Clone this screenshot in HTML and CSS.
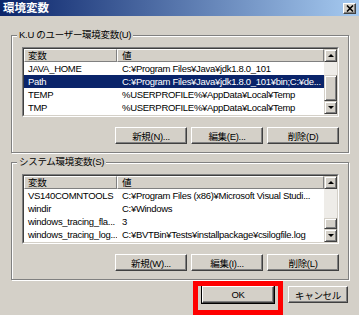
FILE: index.html
```html
<!DOCTYPE html>
<html lang="ja">
<head>
    <meta charset="UTF-8">
    <title>環境変数</title>
    <link rel="stylesheet" href="styles.css">
</head>
<body>
    <div class="titlebar">
        <span class="title">環境変数</span>
        <span class="close">
            <svg width="8" height="7" viewBox="0 0 8 7"><path d="M1 0.5L7 6.5M7 0.5L1 6.5" stroke="#000" stroke-width="1.6"/></svg>
        </span>
    </div>

    <fieldset class="group">
        <legend>K.U のユーザー環境変数(U)</legend>
        <div class="list">
            <div class="listIn">
                <div class="rows">
                    <div class="head"><span class="h1">変数</span><span class="h2">値</span></div>
                    <div class="row"><span class="c1">JAVA_HOME</span><span class="c2">C:¥Program Files¥Java¥jdk1.8.0_101</span></div>
                    <div class="row sel"><span class="c1">Path</span><span class="c2">C:¥Program Files¥Java¥jdk1.8.0_101¥bin;C:¥de...</span></div>
                    <div class="row"><span class="c1">TEMP</span><span class="c2">%USERPROFILE%¥AppData¥Local¥Temp</span></div>
                    <div class="row"><span class="c1">TMP</span><span class="c2">%USERPROFILE%¥AppData¥Local¥Temp</span></div>
                </div>
                <div class="scroll">
                    <div class="sbBtn"><span class="up"></span></div>
                    <div class="track t1"></div>
                    <div class="thumb th1"></div>
                    <div class="sbBtn"><span class="down"></span></div>
                </div>
            </div>
        </div>
        <div class="btns">
            <button>新規(N)...</button>
            <button>編集(E)...</button>
            <button>削除(D)</button>
        </div>
    </fieldset>

    <fieldset class="group">
        <legend>システム環境変数(S)</legend>
        <div class="list">
            <div class="listIn">
                <div class="rows">
                    <div class="head"><span class="h1">変数</span><span class="h2">値</span></div>
                    <div class="row"><span class="c1">VS140COMNTOOLS</span><span class="c2">C:¥Program Files (x86)¥Microsoft Visual Studi...</span></div>
                    <div class="row"><span class="c1">windir</span><span class="c2">C:¥Windows</span></div>
                    <div class="row"><span class="c1">windows_tracing_fla...</span><span class="c2">3</span></div>
                    <div class="row"><span class="c1">windows_tracing_log...</span><span class="c2">C:¥BVTBin¥Tests¥installpackage¥csilogfile.log</span></div>
                </div>
                <div class="scroll">
                    <div class="sbBtn"><span class="up"></span></div>
                    <div class="track t2"></div>
                    <div class="thumb th2"></div>
                    <div class="sbBtn"><span class="down"></span></div>
                </div>
            </div>
        </div>
        <div class="btns">
            <button>新規(W)...</button>
            <button>編集(I)...</button>
            <button>削除(L)</button>
        </div>
    </fieldset>

    <div class="footer">
        <button class="default">OK</button>
        <button class="cancel">キャンセル</button>
    </div>

    <div class="mark"></div>
</body>
</html>
```

FILE: styles.css
```css
*{
    margin: 0;
    padding: 0;
    box-sizing: border-box;
}
body{
    width: 359px;
    height: 315px;
    background: #d4d0c8;
    font-family: "Liberation Sans", "Noto Sans CJK JP", sans-serif;
    font-size: 9.5px;
    letter-spacing: -0.3px;
    color: #000;
    overflow: hidden;
    position: relative;
}
/* title bar */
.titlebar{
    height: 16px;
    background: linear-gradient(to right, #0a246a, #a6caf0);
    display: flex;
    align-items: center;
    justify-content: space-between;
    padding: 0 3px;
}
.title{
    color: #fff;
    font-weight: bold;
    font-size: 11.5px;
    line-height: 15px;
    letter-spacing: 0;
}
.close{
    width: 13px;
    height: 11px;
    background: #d4d0c8;
    border: 1px solid;
    border-color: #fff #404040 #404040 #fff;
    box-shadow: inset -1px -1px #808080;
    display: flex;
    align-items: center;
    justify-content: center;
}
/* group boxes */
.group{
    width: 338px;
    margin: 13px 0 0 11px;
    border: 1px solid #808080;
    box-shadow: 1px 1px 0 #fff, inset 1px 1px 0 #fff;
    padding: 6px 9px 8px 10px;
}
.group + .group{
    margin-top: 3px;
}
.group legend{
    margin-left: -5px;
    padding: 0 2px;
    line-height: 12px;
    background: #d4d0c8;
}
/* list view */
.list{
    height: 70px;
    border: 1px solid;
    border-color: #808080 #fff #fff #808080;
}
.listIn{
    height: 100%;
    display: flex;
    border: 1px solid;
    border-color: #404040 #d4d0c8 #d4d0c8 #404040;
    background: #fff;
}
.rows{
    flex: 1;
    overflow: hidden;
}
.head{
    display: flex;
    height: 13px;
    line-height: 11px;
    background: #d4d0c8;
}
.h1, .h2{
    border: 1px solid;
    border-color: #fff #808080 #808080 #fff;
}
.h1{
    width: 93px;
    padding-left: 3px;
}
.h2{
    flex: 1;
    padding-left: 4px;
}
.row{
    display: flex;
    height: 13px;
    line-height: 13px;
    white-space: nowrap;
}
.c1{
    width: 93px;
    padding-left: 4px;
    overflow: hidden;
}
.c2{
    flex: 1;
    padding-left: 5px;
    overflow: hidden;
}
.sel{
    background: #0a246a;
    color: #fff;
}
/* scrollbar */
.scroll{
    width: 13px;
    display: flex;
    flex-direction: column;
    background: #eeece8;
}
.sbBtn, .thumb{
    background: #d4d0c8;
    border: 1px solid;
    border-color: #d4d0c8 #404040 #404040 #d4d0c8;
    box-shadow: inset 1px 1px #fff, inset -1px -1px #808080;
}
.sbBtn{
    height: 13px;
    display: flex;
    align-items: center;
    justify-content: center;
}
.up, .down{
    width: 0;
    height: 0;
    border-left: 3px solid transparent;
    border-right: 3px solid transparent;
}
.up{
    border-bottom: 3px solid #000;
}
.down{
    border-top: 3px solid #000;
}
.t1{ height: 13px; }
.th1{ height: 26px; }
.t2{ height: 29px; }
.th2{ height: 11px; }
/* buttons */
.btns{
    display: flex;
    justify-content: flex-end;
    gap: 4px;
    margin-top: 10px;
}
button{
    width: 72px;
    height: 17px;
    font: inherit;
    letter-spacing: inherit;
    color: #000;
    background: #d4d0c8;
    border: 1px solid;
    border-color: #fff #404040 #404040 #fff;
    box-shadow: inset -1px -1px #808080;
}
.footer{
    display: flex;
    justify-content: flex-end;
    gap: 14px;
    margin-top: 6px;
    padding-right: 11px;
}
.default{
    width: 72px;
    outline: 1px solid #000;
}
.cancel{
    width: 60px;
}
/* red highlight drawn over the OK button */
.mark{
    position: absolute;
    left: 193px;
    top: 281px;
    width: 90px;
    height: 34px;
    border: 5px solid #ff0000;
}
```
